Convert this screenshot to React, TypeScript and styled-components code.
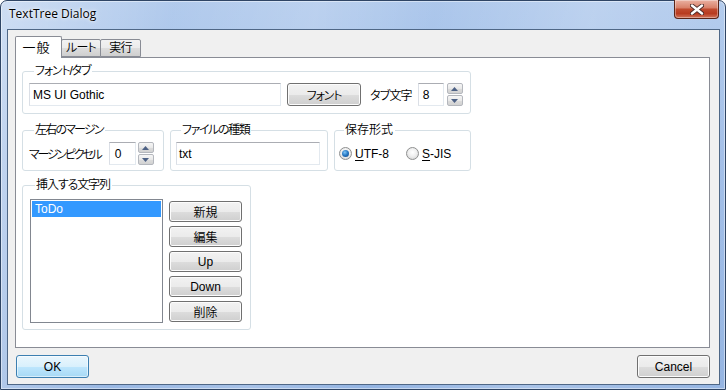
import React from "react";
import styled, { createGlobalStyle } from "styled-components";

const UI_FONT = `"Liberation Sans", "Noto Sans CJK JP", sans-serif`;

const Global = createGlobalStyle`
  html, body { margin: 0; padding: 0; background: #ffffff; }
  body { width: 726px; height: 390px; overflow: hidden; }
  * { box-sizing: border-box; }
`;

const Frame = styled.div`
  width: 726px;
  height: 390px;
  display: flex;
  flex-direction: column;
  padding: 0 5px 4px 6px;
  border: 1px solid #2f4565;
  border-radius: 7px 7px 0 0;
  background:
    linear-gradient(100deg, rgba(255,255,255,0.42) 0%, rgba(255,255,255,0.08) 22%, rgba(255,255,255,0.2) 40%, rgba(255,255,255,0.02) 55%, rgba(255,255,255,0.22) 75%, rgba(255,255,255,0.04) 100%),
    linear-gradient(180deg, #abc6eb 0%, #9dbbe6 40%, #91b2e1 100%);
  box-shadow: inset 0 0 0 1px rgba(255,255,255,0.45);
  font-family: ${UI_FONT};
  font-feature-settings: "palt";
  font-size: 12px;
  font-weight: 350;
  color: #000;
`;

const TitleBar = styled.div`
  height: 28px;
  flex: none;
  display: flex;
  align-items: flex-start;
  justify-content: space-between;
`;

const TitleText = styled.div`
  font-family: "Open Sans", "Noto Sans", sans-serif;
  font-size: 12px;
  font-weight: 400;
  line-height: 16px;
  padding: 5px 0 0 2px;
  color: #000;
  text-shadow: 0 0 5px rgba(255,255,255,0.95), 0 0 2px rgba(255,255,255,0.9);
`;

const CloseButton = styled.div`
  width: 45px;
  height: 19px;
  margin-top: -1px;
  margin-right: 1px;
  border: 1px solid #5a2418;
  border-top: none;
  border-radius: 0 0 4px 4px;
  background: linear-gradient(180deg, #eab1a2 0%, #d9826b 42%, #c04a2e 52%, #b83b20 75%, #d1745b 100%);
  box-shadow: inset 0 0 0 1px rgba(255,255,255,0.35);
  display: flex;
  align-items: center;
  justify-content: center;
`;

const Client = styled.div`
  flex: 1;
  display: flex;
  flex-direction: column;
  border: 1px solid #4f6786;
  background: #f0f0f0;
  padding: 6px 9px 6px 7px;
`;

const TabStrip = styled.div`
  display: flex;
  align-items: flex-end;
  height: 21px;
  flex: none;
`;

const Tab = styled.div<{ $active?: boolean; $w: number }>`
  width: ${(p) => p.$w}px;
  height: ${(p) => (p.$active ? 22 : 18)}px;
  margin-bottom: ${(p) => (p.$active ? -1 : 0)}px;
  margin-left: ${(p) => (p.$active ? 0 : -1)}px;
  position: relative;
  z-index: ${(p) => (p.$active ? 2 : 1)};
  border: 1px solid #898c95;
  border-bottom: ${(p) => (p.$active ? "none" : "1px solid #898c95")};
  border-radius: 2px 2px 0 0;
  background: ${(p) =>
    p.$active ? "#ffffff" : "linear-gradient(180deg, #f2f2f2 0%, #ebebeb 50%, #dddddd 51%, #cfcfcf 100%)"};
  display: flex;
  align-items: ${(p) => (p.$active ? "flex-start" : "center")};
  justify-content: center;
  padding-top: ${(p) => (p.$active ? 3 : 0)}px;
  padding-right: ${(p) => (p.$active ? 4 : 0)}px;
  font-size: ${(p) => (p.$active ? 13 : 12)}px;
  letter-spacing: ${(p) => (p.$active ? 1 : -0.8)}px;
  line-height: 15px;
`;

const Panel = styled.div`
  flex: 1;
  border: 1px solid #898c95;
  background: #ffffff;
  padding: 6px 0 0 6px;
  display: flex;
  flex-direction: column;
  align-items: flex-start;
`;

const Row = styled.div<{ $gap: number; $mt: number }>`
  display: flex;
  gap: ${(p) => p.$gap}px;
  margin-top: ${(p) => p.$mt}px;
`;

const Group = styled.fieldset<{ $w: number; $pad: string }>`
  width: ${(p) => p.$w}px;
  margin: 0;
  min-width: 0;
  border: 1px solid #d5dfe5;
  border-radius: 3px;
  padding: ${(p) => p.$pad};
  display: flex;
  align-items: flex-start;
`;

const Legend = styled.legend<{ $ls?: number }>`
  padding: 0 2px 0 1px;
  margin-left: 5px;
  line-height: 14px;
  font-size: 12px;
  letter-spacing: ${(p) => p.$ls ?? 0}px;
  color: #000;
`;

const FieldRow = styled.div`
  display: flex;
  align-items: center;
`;

const TextBox = styled.div<{ $w: number; $h?: number; $pl?: number; $ml?: number }>`
  width: ${(p) => p.$w}px;
  height: ${(p) => p.$h ?? 23}px;
  margin-left: ${(p) => p.$ml ?? 0}px;
  border: 1px solid #e3e9ef;
  border-top-color: #abadb3;
  border-left-color: #dbdfe6;
  background: #ffffff;
  padding-left: ${(p) => p.$pl ?? 3}px;
  display: flex;
  align-items: center;
  font-size: 12px;
  font-weight: 400;
  flex: none;
`;

const Label = styled.span<{ $ml?: number; $ls?: number }>`
  margin-left: ${(p) => p.$ml ?? 0}px;
  white-space: nowrap;
  font-size: 12px;
  letter-spacing: ${(p) => p.$ls ?? 0}px;
`;

const PushButton = styled.div<{ $w: number; $h: number; $ml?: number; $ls?: number; $default?: boolean }>`
  width: ${(p) => p.$w}px;
  height: ${(p) => p.$h}px;
  margin-left: ${(p) => p.$ml ?? 0}px;
  flex: none;
  border: 1px solid ${(p) => (p.$default ? "#3c7fb1" : "#707070")};
  border-radius: 3px;
  background: ${(p) =>
    p.$default
      ? "linear-gradient(180deg, #eaf6fd 0%, #d9f0fc 50%, #bee6fd 51%, #a7d9f5 100%)"
      : "linear-gradient(180deg, #f2f2f2 0%, #ebebeb 50%, #dddddd 51%, #cfcfcf 100%)"};
  box-shadow: inset 0 0 0 1px ${(p) => (p.$default ? "rgba(255,255,255,0.55)" : "#fcfcfc")};
  display: flex;
  align-items: center;
  justify-content: center;
  font-size: 12px;
  letter-spacing: ${(p) => p.$ls ?? 0}px;
  color: #000;
`;

const Spin = styled.div<{ $ml: number }>`
  width: 16px;
  height: 23px;
  margin-left: ${(p) => p.$ml}px;
  display: flex;
  flex-direction: column;
  gap: 1px;
  flex: none;
`;

const SpinHalf = styled.div`
  flex: 1;
  border: 1px solid #b4b7bd;
  border-radius: 2px;
  background: linear-gradient(180deg, #f6f6f6 0%, #e9e9e9 50%, #dcdcdc 51%, #d2d2d2 100%);
  display: flex;
  align-items: center;
  justify-content: center;
`;

const RadioItem = styled.div<{ $ml?: number }>`
  display: flex;
  align-items: center;
  margin-left: ${(p) => p.$ml ?? 0}px;
  font-weight: 400;
`;

const RadioCircle = styled.div<{ $checked?: boolean }>`
  width: 13px;
  height: 13px;
  border-radius: 50%;
  border: 1px solid #8e8f8f;
  background: radial-gradient(circle at 50% 40%, #ffffff 0%, #f0f0f0 45%, #cdcdcd 100%);
  display: flex;
  align-items: center;
  justify-content: center;
  margin-right: 3px;
  flex: none;
  &::after {
    content: "";
    display: ${(p) => (p.$checked ? "block" : "none")};
    width: 7px;
    height: 7px;
    border-radius: 50%;
    background: radial-gradient(circle at 40% 35%, #7fc4f5 0%, #2a7cc7 45%, #0d3f7e 100%);
  }
`;

const Accel = styled.span`
  text-decoration: underline;
  text-underline-offset: 2px;
`;

const ListBox = styled.div`
  width: 133px;
  height: 124px;
  border: 1px solid #828790;
  background: #ffffff;
  padding: 1px;
  flex: none;
`;

const ListItem = styled.div<{ $selected?: boolean }>`
  height: 16px;
  line-height: 16px;
  padding-left: 3px;
  background: ${(p) => (p.$selected ? "#3399ff" : "transparent")};
  color: ${(p) => (p.$selected ? "#ffffff" : "#000")};
  font-size: 12px;
  font-weight: 400;
`;

const ButtonColumn = styled.div`
  display: flex;
  flex-direction: column;
  gap: 4px;
  margin-left: 6px;
  margin-top: 2px;
`;

const BottomRow = styled.div`
  display: flex;
  justify-content: space-between;
  margin-top: 7px;
  padding-left: 1px;
  flex: none;
`;

const Arrow = ({ up }: { up?: boolean }) => (
  <svg width="7" height="4" viewBox="0 0 7 4">
    <path d={up ? "M0 4 L3.5 0 L7 4 Z" : "M0 0 L3.5 4 L7 0 Z"} fill="#4d6185" />
  </svg>
);

const SpinButtons = ({ ml }: { ml: number }) => (
  <Spin $ml={ml}>
    <SpinHalf>
      <Arrow up />
    </SpinHalf>
    <SpinHalf>
      <Arrow />
    </SpinHalf>
  </Spin>
);

const CloseGlyph = () => (
  <svg width="14" height="11" viewBox="0 0 14 11">
    <path d="M2 1.5 L12 9.5 M12 1.5 L2 9.5" stroke="#4a2a28" strokeWidth="4.2" strokeLinecap="round" />
    <path d="M2 1.5 L12 9.5 M12 1.5 L2 9.5" stroke="#ffffff" strokeWidth="2.4" strokeLinecap="round" />
  </svg>
);

export default function App() {
  return (
    <>
      <Global />
      <Frame>
        <TitleBar>
          <TitleText>TextTree Dialog</TitleText>
          <CloseButton>
            <CloseGlyph />
          </CloseButton>
        </TitleBar>
        <Client>
          <TabStrip>
            <Tab $active $w={47}>一般</Tab>
            <Tab $w={40}>ルート</Tab>
            <Tab $w={41}>実行</Tab>
          </TabStrip>
          <Panel>
            <Row $gap={0} $mt={0}>
              <Group $w={449} $pad="5px 7px 7px 6px">
                <Legend $ls={-1.2}>フォント/タブ</Legend>
                <FieldRow>
                  <TextBox $w={252}>MS UI Gothic</TextBox>
                  <PushButton $w={74} $h={23} $ml={6} $ls={-1.2}>フォント</PushButton>
                  <Label $ml={9} $ls={-0.8}>タブ文字</Label>
                  <TextBox $w={26} $pl={4} $ml={6}>8</TextBox>
                  <SpinButtons ml={3} />
                </FieldRow>
              </Group>
            </Row>
            <Row $gap={6} $mt={9}>
              <Group $w={142} $pad="5px 6px 5px 6px">
                <Legend $ls={-1.8}>左右のマージン</Legend>
                <FieldRow>
                  <Label $ls={-2.2}>マージンピクセル</Label>
                  <TextBox $w={27} $pl={5} $ml={8}>0</TextBox>
                  <SpinButtons ml={2} />
                </FieldRow>
              </Group>
              <Group $w={158} $pad="5px 6px 5px 5px">
                <Legend $ls={-1.4}>ファイルの種類</Legend>
                <TextBox $w={144} $pl={2}>txt</TextBox>
              </Group>
              <Group $w={137} $pad="5px 6px 5px 4px">
                <Legend>保存形式</Legend>
                <FieldRow style={{ height: 23 }}>
                  <RadioItem>
                    <RadioCircle $checked />
                    <span>
                      <Accel>U</Accel>TF-8
                    </span>
                  </RadioItem>
                  <RadioItem $ml={17}>
                    <RadioCircle />
                    <span>
                      <Accel>S</Accel>-JIS
                    </span>
                  </RadioItem>
                </FieldRow>
              </Group>
            </Row>
            <Row $gap={0} $mt={7}>
              <Group $w={229} $pad="7px 8px 6px 7px">
                <Legend $ls={-1.1}>挿入する文字列</Legend>
                <ListBox>
                  <ListItem $selected>ToDo</ListItem>
                </ListBox>
                <ButtonColumn>
                  <PushButton $w={73} $h={21}>新規</PushButton>
                  <PushButton $w={73} $h={21}>編集</PushButton>
                  <PushButton $w={73} $h={21}>Up</PushButton>
                  <PushButton $w={73} $h={21}>Down</PushButton>
                  <PushButton $w={73} $h={21}>削除</PushButton>
                </ButtonColumn>
              </Group>
            </Row>
          </Panel>
          <BottomRow>
            <PushButton $w={73} $h={23} $default>OK</PushButton>
            <PushButton $w={73} $h={23}>Cancel</PushButton>
          </BottomRow>
        </Client>
      </Frame>
    </>
  );
}
